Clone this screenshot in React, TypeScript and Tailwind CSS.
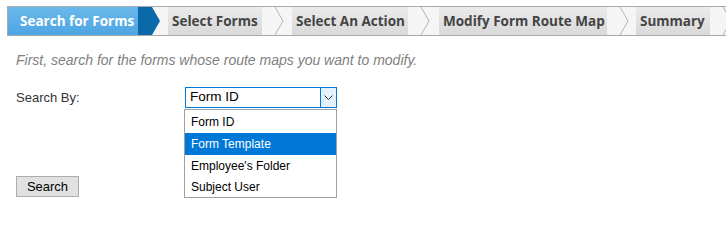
import React from "react"

const steps = [
  { label: "Select Forms", w: "w-[94px]", gap: "w-[30px]" },
  { label: "Select An Action", w: "w-[116px]", gap: "w-[31px]" },
  { label: "Modify Form Route Map", w: "w-[168px]", gap: "w-[29px]" },
  { label: "Summary", w: "w-[74px]", gap: "w-[30px]" },
]

const options = ["Form ID", "Form Template", "Employee's Folder", "Subject User"]

function Chevron() {
  return (
    <svg width="30" height="28" viewBox="0 0 30 28" className="block">
      <polyline points="13,0 21,14 13,28" fill="none" stroke="#b5b5b5" strokeWidth="1" />
    </svg>
  )
}

export default function App() {
  return (
    <div className="w-[726px] h-[212px] overflow-hidden bg-white" style={{ fontFamily: "'Liberation Sans', Arial, sans-serif" }}>
      <div className="pt-[6px] pl-[7px]">
        {/* wizard steps */}
        <div className="flex w-[760px] h-[30px] border-y border-l border-[#a9a9a9] bg-[#f5f5f5]">
          <div className="flex items-center w-[130px] h-full pl-[12px] bg-gradient-to-b from-[#6ab8ec] to-[#4da5e2] text-white text-[13.5px] font-bold whitespace-nowrap" style={{ fontFamily: "'Open Sans', sans-serif" }}>
            Search for Forms
          </div>
          <div className="w-[14px] h-full bg-[#0b69aa]" />
          <div className="w-[16px] h-full">
            <svg width="8" height="28" viewBox="0 0 8 28" className="block">
              <polygon points="0,0 8,14 0,28" fill="#0b69aa" />
            </svg>
          </div>
          {steps.map((s) => (
            <React.Fragment key={s.label}>
              <div
                className={`flex items-center ${s.w} h-full pl-[4px] bg-gradient-to-b from-[#ebebeb] to-[#d9d9d9] text-[#444] text-[13.5px] font-bold whitespace-nowrap`}
                style={{ fontFamily: "'Open Sans', sans-serif" }}
              >
                {s.label}
              </div>
              <div className={`${s.gap} h-full overflow-hidden`}>
                <Chevron />
              </div>
            </React.Fragment>
          ))}
        </div>
      </div>

      <div className="pl-[16px]">
        <p className="mt-[16px] text-[14px] italic text-[#808080] leading-[16px]">
          First, search for the forms whose route maps you want to modify.
        </p>

        <div className="flex items-center mt-[19px]">
          <div className="w-[169px] text-[13px] text-[#333]">Search By:</div>
          <div className="relative">
            <div className="flex w-[152px] h-[21px] border border-[#0078d7] bg-white">
              <div className="flex-1 flex items-center pl-[4px] text-[13.5px] text-black">Form ID</div>
              <div className="flex items-center justify-center w-[16px] h-full border-l border-[#0078d7] bg-[#e5f1fb]">
                <svg width="9" height="6" viewBox="0 0 9 6">
                  <polyline points="0.5,0.5 4.5,4.5 8.5,0.5" fill="none" stroke="#333" strokeWidth="1" />
                </svg>
              </div>
            </div>
            <div className="absolute left-[-1px] top-[22px] w-[153px] pt-[1px] border border-[#a0a0a0] bg-white">
              {options.map((o, i) => (
                <div
                  key={o}
                  className={`flex items-center ${i === options.length - 1 ? "h-[20px]" : "h-[22px]"} pl-[6px] text-[12px] ${o === "Form Template" ? "bg-[#0078d7] text-white" : "text-black"}`}
                >
                  {o}
                </div>
              ))}
            </div>
          </div>
        </div>

        <button className="mt-[68px] w-[63px] h-[21px] border border-[#adadad] bg-[#e1e1e1] text-[13px] text-black leading-none">
          Search
        </button>
      </div>
    </div>
  )
}
